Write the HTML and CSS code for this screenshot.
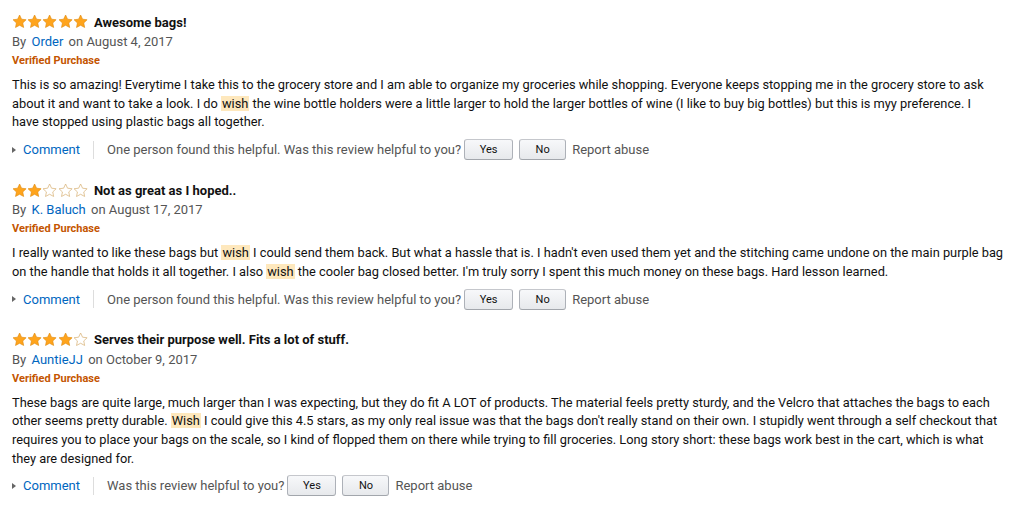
FILE: index.html
```html
<!DOCTYPE html>
<html>
<head>
<meta charset="utf-8">
<link rel="stylesheet" href="styles.css">
</head>
<body>
<svg width="0" height="0" class="defs">
  <defs>
    <path id="star" d="M12 1.6l3.1 6.6 7.2.9-5.3 5 1.4 7.2L12 17.8l-6.4 3.5 1.4-7.2-5.3-5 7.2-.9z"/>
  </defs>
</svg>
<div class="reviews">
  <div class="review">
    <div class="head">
      <span class="stars">
        <svg class="star full" viewBox="0 0 24 24"><use href="#star"/></svg><svg class="star full" viewBox="0 0 24 24"><use href="#star"/></svg><svg class="star full" viewBox="0 0 24 24"><use href="#star"/></svg><svg class="star full" viewBox="0 0 24 24"><use href="#star"/></svg><svg class="star full" viewBox="0 0 24 24"><use href="#star"/></svg>
      </span>
      <span class="title">Awesome bags!</span>
    </div>
    <div class="byline">By <a class="link author">Order</a> on August 4, 2017</div>
    <div class="verified">Verified Purchase</div>
    <p class="body">This is so amazing! Everytime I take this to the grocery store and I am able to organize my groceries while shopping. Everyone keeps stopping me in the grocery store to ask<br>about it and want to take a look. I do <mark>wish</mark> the wine bottle holders were a little larger to hold the larger bottles of wine (I like to buy big bottles) but this is myy preference. I<br>have stopped using plastic bags all together.</p>
    <div class="actions">
      <a class="link comment"><span class="tri"></span>Comment</a>
      <span class="sep"></span>
      <span class="helpful">One person found this helpful. Was this review helpful to you?</span>
      <button class="btn yes">Yes</button>
      <button class="btn no">No</button>
      <span class="report">Report abuse</span>
    </div>
  </div>

  <div class="review">
    <div class="head">
      <span class="stars">
        <svg class="star full" viewBox="0 0 24 24"><use href="#star"/></svg><svg class="star full" viewBox="0 0 24 24"><use href="#star"/></svg><svg class="star empty" viewBox="0 0 24 24"><use href="#star"/></svg><svg class="star empty" viewBox="0 0 24 24"><use href="#star"/></svg><svg class="star empty" viewBox="0 0 24 24"><use href="#star"/></svg>
      </span>
      <span class="title">Not as great as I hoped..</span>
    </div>
    <div class="byline">By <a class="link author">K. Baluch</a> on August 17, 2017</div>
    <div class="verified">Verified Purchase</div>
    <p class="body">I really wanted to like these bags but <mark>wish</mark> I could send them back. But what a hassle that is. I hadn't even used them yet and the stitching came undone on the main purple bag<br>on the handle that holds it all together. I also <mark>wish</mark> the cooler bag closed better. I'm truly sorry I spent this much money on these bags. Hard lesson learned.</p>
    <div class="actions">
      <a class="link comment"><span class="tri"></span>Comment</a>
      <span class="sep"></span>
      <span class="helpful">One person found this helpful. Was this review helpful to you?</span>
      <button class="btn yes">Yes</button>
      <button class="btn no">No</button>
      <span class="report">Report abuse</span>
    </div>
  </div>

  <div class="review">
    <div class="head">
      <span class="stars">
        <svg class="star full" viewBox="0 0 24 24"><use href="#star"/></svg><svg class="star full" viewBox="0 0 24 24"><use href="#star"/></svg><svg class="star full" viewBox="0 0 24 24"><use href="#star"/></svg><svg class="star full" viewBox="0 0 24 24"><use href="#star"/></svg><svg class="star empty" viewBox="0 0 24 24"><use href="#star"/></svg>
      </span>
      <span class="title">Serves their purpose well. Fits a lot of stuff.</span>
    </div>
    <div class="byline">By <a class="link author">AuntieJJ</a> on October 9, 2017</div>
    <div class="verified">Verified Purchase</div>
    <p class="body">These bags are quite large, much larger than I was expecting, but they do fit A LOT of products. The material feels pretty sturdy, and the Velcro that attaches the bags to each<br>other seems pretty durable. <mark>Wish</mark> I could give this 4.5 stars, as my only real issue was that the bags don't really stand on their own. I stupidly went through a self checkout that<br>requires you to place your bags on the scale, so I kind of flopped them on there while trying to fill groceries. Long story short: these bags work best in the cart, which is what<br>they are designed for.</p>
    <div class="actions">
      <a class="link comment"><span class="tri"></span>Comment</a>
      <span class="sep"></span>
      <span class="helpful">Was this review helpful to you?</span>
      <button class="btn yes">Yes</button>
      <button class="btn no">No</button>
      <span class="report">Report abuse</span>
    </div>
  </div>
</div>
</body>
</html>
```

FILE: styles.css
```css
html, body {
  margin: 0;
  padding: 0;
  background: #fff;
}
body {
  font-family: Roboto, "Liberation Sans", sans-serif;
  font-size: 13px;
  color: #111;
  overflow: hidden;
}
.defs {
  position: absolute;
  width: 0;
  height: 0;
}
.reviews {
  padding: 12px 0 0 12px;
  width: 1012px;
}
.review {
  margin-bottom: 20px;
}
.head {
  display: flex;
  align-items: center;
  height: 20px;
}
.stars {
  display: flex;
  margin-right: 6px;
}
.star {
  width: 15.2px;
  height: 15.2px;
  display: block;
}
.star.full {
  fill: #ffa41c;
  stroke: #e08a0c;
  stroke-width: 1;
}
.star.empty {
  fill: #fff;
  stroke: #d9b47a;
  stroke-width: 1.2;
}
.title {
  font-weight: bold;
  color: #111;
}
.byline {
  line-height: 19px;
  color: #555;
}
.link {
  color: #0066c0;
  text-decoration: none;
}
.author {
  margin: 0 2px;
}
.verified {
  line-height: 19px;
  font-size: 11px;
  font-weight: bold;
  color: #c45500;
}
.body {
  margin: 6px 0 0;
  font-size: 12.8px;
  line-height: 18.7px;
  color: #111;
  white-space: nowrap;
}
mark {
  background: #fee8bd;
  color: inherit;
  padding: 0 1px;
}
.actions {
  display: flex;
  align-items: center;
  height: 21px;
  margin-top: 7px;
  color: #555;
}
.comment {
  display: flex;
  align-items: center;
}
.tri {
  width: 0;
  height: 0;
  border-left: 4px solid #666;
  border-top: 3px solid transparent;
  border-bottom: 3px solid transparent;
  margin: 0 7px 0 0;
}
.sep {
  width: 1px;
  height: 18px;
  background: #ddd;
  margin: 0 13px;
}
.btn {
  font-family: inherit;
  font-size: 11px;
  color: #111;
  height: 21px;
  padding: 0;
  border: 1px solid #adb1b8;
  border-color: #c5c7cc #adb1b8 #a2a6ac;
  border-radius: 3px;
  background: linear-gradient(#f7f8fa, #e7e9ec);
  margin-left: 6px;
}
.btn.yes {
  width: 49px;
  margin-left: 3px;
}
.btn.no {
  width: 47px;
}
.report {
  margin-left: 6px;
}
```
